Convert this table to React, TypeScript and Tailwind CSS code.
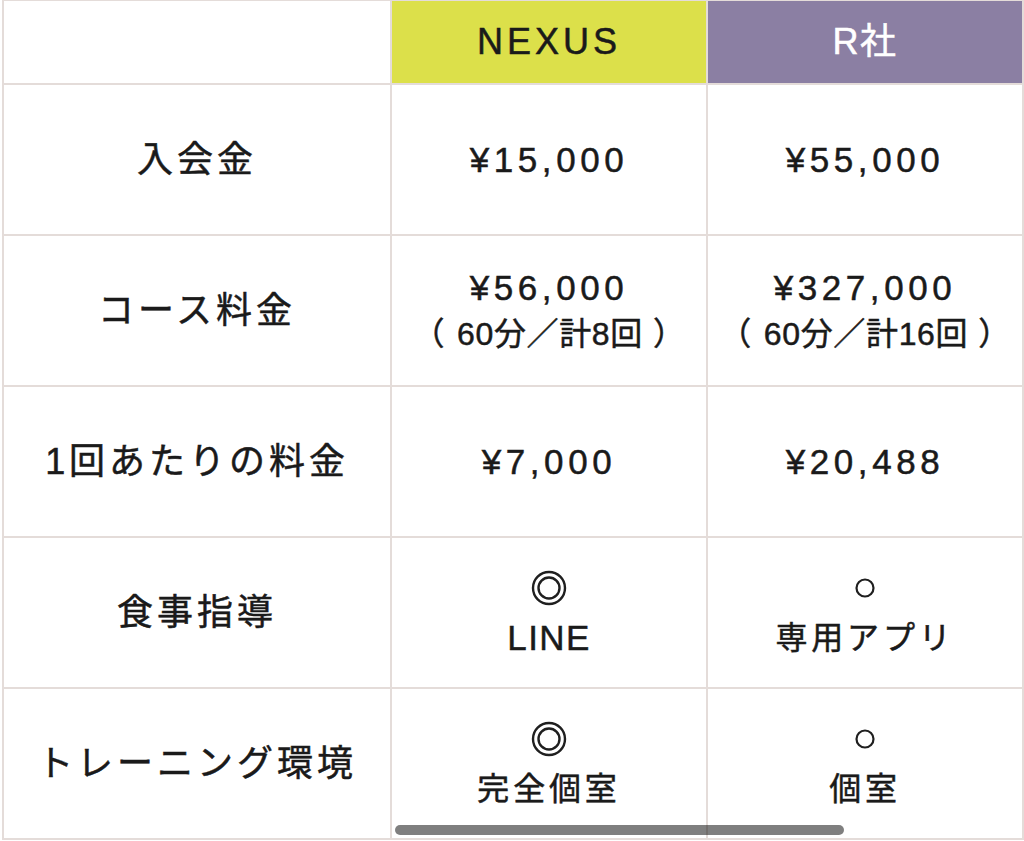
const rows = [
  { label: "入会金", nexus: { main: "¥15,000" }, r: { main: "¥55,000" } },
  {
    label: "コース料金",
    nexus: { main: "¥56,000", sub: "60分／計8回" },
    r: { main: "¥327,000", sub: "60分／計16回" },
  },
  { label: "1回あたりの料金", nexus: { main: "¥7,000" }, r: { main: "¥20,488" } },
];

const marks = [
  { label: "食事指導", nexus: { mark: "◎", text: "LINE", latin: true }, r: { mark: "○", text: "専用アプリ" } },
  { label: "トレーニング環境", nexus: { mark: "◎", text: "完全個室" }, r: { mark: "○", text: "個室" } },
];

type Mark = { mark: string; text: string; latin?: boolean };

function MarkCell({ m }: { m: Mark }) {
  return (
    <div className="flex flex-col items-center justify-center bg-white">
      {m.mark === "◎" ? (
        <span className="flex h-[50px] items-center justify-center">
          <svg width="36" height="36" viewBox="0 0 36 36" fill="none" stroke="#1f1f1f" strokeWidth="2.4">
            <circle cx="18" cy="18" r="16" />
            <circle cx="18" cy="18" r="10.5" />
          </svg>
        </span>
      ) : (
        <span className="flex h-[50px] items-center justify-center">
          <svg width="22" height="22" viewBox="0 0 22 22" fill="none" stroke="#1f1f1f" strokeWidth="2.2">
            <circle cx="11" cy="11" r="8.5" />
          </svg>
        </span>
      )}
      <span
        className={
          m.latin
            ? "text-[35px] leading-[50px] tracking-[0.04em]"
            : "text-[32px] leading-[50px] tracking-[0.12em]"
        }
      >
        {m.text}
      </span>
    </div>
  );
}

function Label({ children }: { children: string }) {
  return (
    <div className="flex items-center justify-center bg-white text-[36px] tracking-[0.11em]">{children}</div>
  );
}

export default function App() {
  return (
    <div className="relative min-h-screen bg-white font-['Liberation_Sans','Noto_Sans_CJK_JP',sans-serif] text-[#1a1a1a] [-webkit-text-stroke:0.5px_currentColor]">
      <div className="ml-[2px] grid w-[1022px] grid-cols-[386px_314px_314px] grid-rows-[82px_repeat(5,149px)] gap-[2px] bg-[#e4dcd9] px-[2px] pt-[1px] pb-[2px]">
        <div className="bg-white" />
        <div className="flex items-center justify-center bg-[#dce04a] text-[36px] tracking-[0.11em] text-[#1a1a1a]">
          NEXUS
        </div>
        <div className="flex items-center justify-center bg-[#8b7fa3] text-[36px] tracking-[0.04em] text-white">
          R社
        </div>

        {rows.map((row) => (
          <>
            <Label key={row.label}>{row.label}</Label>
            {[row.nexus, row.r].map((c, i) => (
              <div key={i} className="flex flex-col items-center justify-center bg-white">
                <span className="text-[35px] leading-[47px] tracking-[0.13em]">{c.main}</span>
                {"sub" in c && c.sub && (
                  <span className="flex text-[32px] leading-[47px] tracking-[0.02em]">
                    <span className="pr-[12px]">（</span>
                    <span>{c.sub}</span>
                    <span className="pl-[10px]">）</span>
                  </span>
                )}
              </div>
            ))}
          </>
        ))}

        {marks.map((row) => (
          <>
            <Label key={row.label}>{row.label}</Label>
            <MarkCell m={row.nexus} />
            <MarkCell m={row.r} />
          </>
        ))}
      </div>

      {/* overlay scrollbar */}
      <div className="absolute left-[395px] top-[825px] h-[10px] w-[449px] rounded-full bg-black/50" />
    </div>
  );
}
